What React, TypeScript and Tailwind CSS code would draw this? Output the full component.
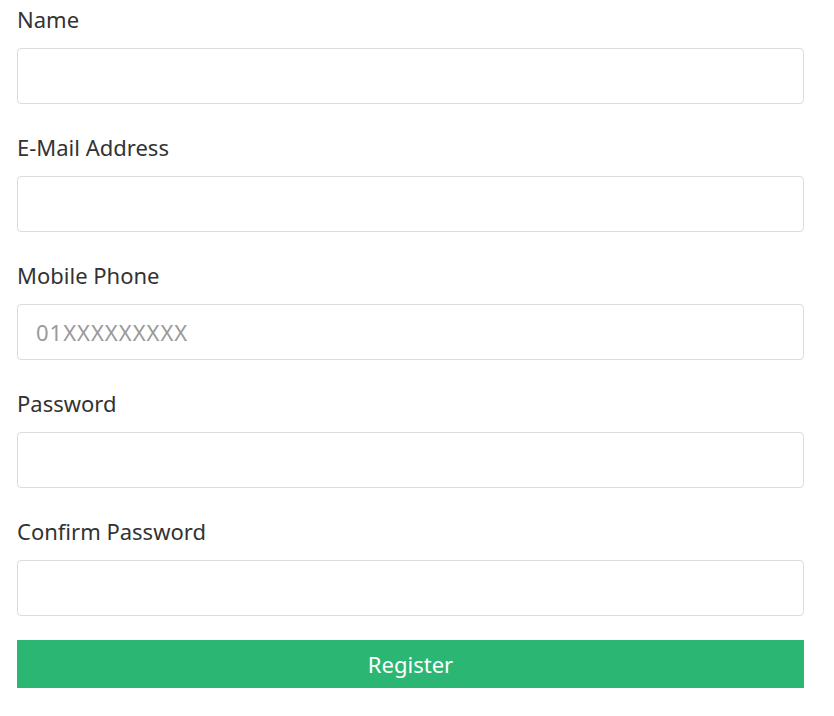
import type { JSX } from "react";

const fields = [
  { label: "Name", type: "text", placeholder: "" },
  { label: "E-Mail Address", type: "email", placeholder: "" },
  { label: "Mobile Phone", type: "text", placeholder: "01XXXXXXXXX" },
  { label: "Password", type: "password", placeholder: "" },
  { label: "Confirm Password", type: "password", placeholder: "" },
];

export default function App(): JSX.Element {
  return (
    <div className="min-h-screen bg-white font-['Noto_Sans',sans-serif] text-[#333]">
      <form className="px-[17px] pr-[30px]">
        {fields.map((f) => (
          <div key={f.label} className="mb-6">
            <label className="mb-2 block h-10 text-[22px] leading-[38px]">{f.label}</label>
            <input
              type={f.type}
              placeholder={f.placeholder}
              className="block h-14 w-full rounded border border-[#dcdcdc] bg-white px-[18px] text-[22px] text-[#333] outline-none placeholder:tracking-[1px] placeholder:text-[#9a9a9a]"
            />
          </div>
        ))}
        <button
          type="button"
          className="block h-12 w-full bg-[#2cb673] text-[22px] text-white"
        >
          Register
        </button>
      </form>
    </div>
  );
}
